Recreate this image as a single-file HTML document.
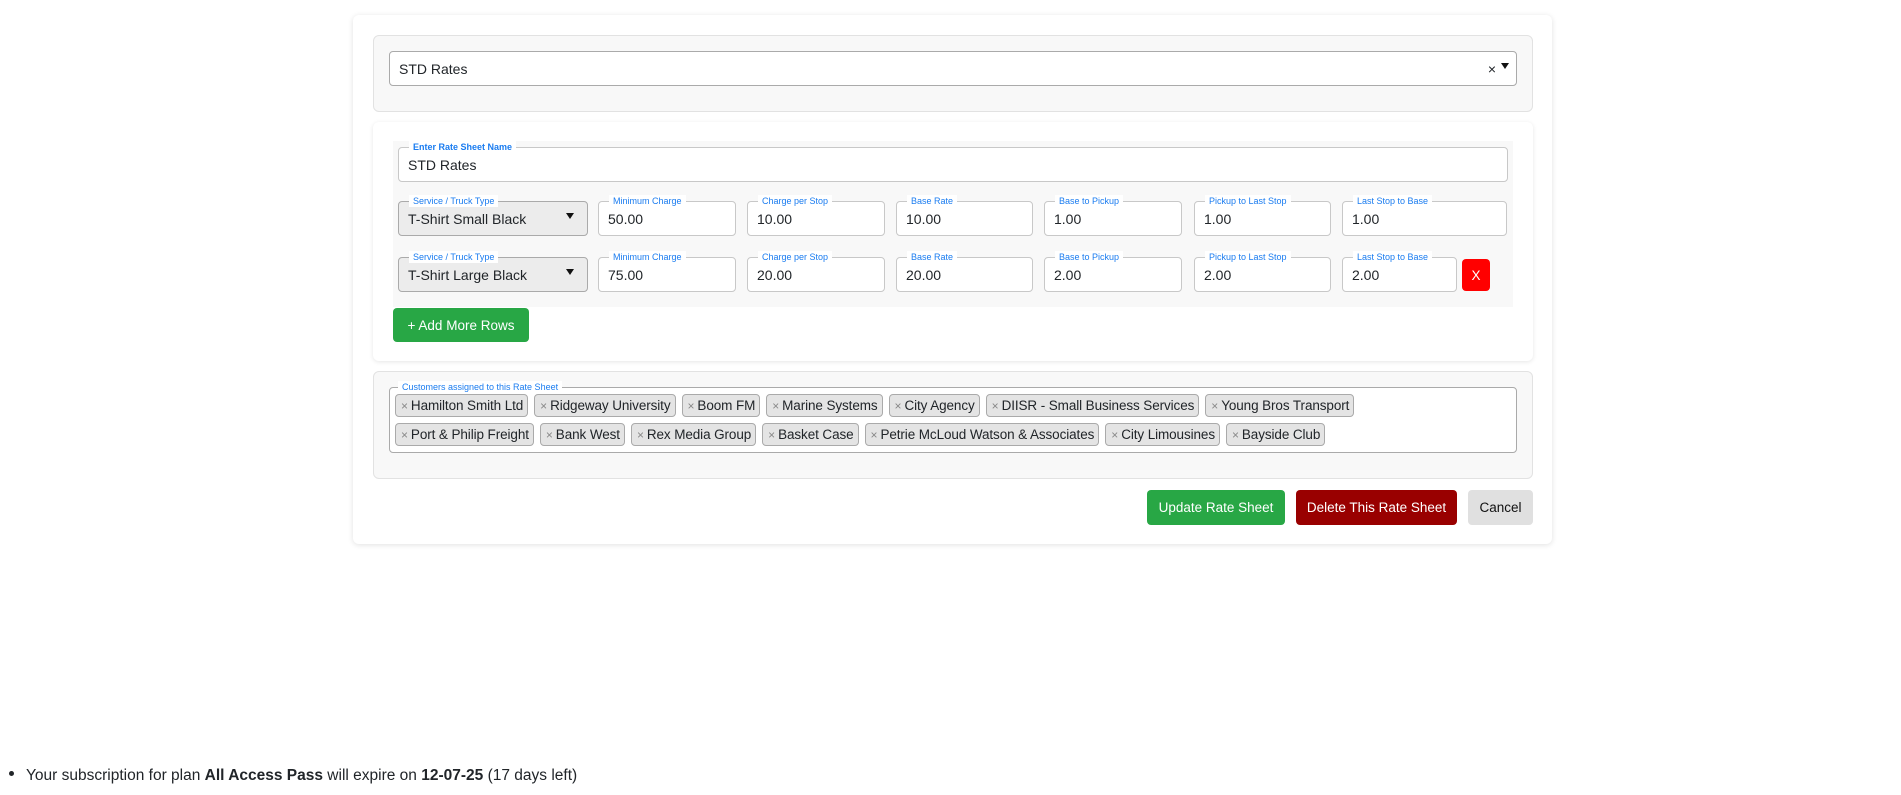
<!DOCTYPE html>
<html><head><meta charset="utf-8"><style>
*{box-sizing:border-box;margin:0;padding:0}
body{width:1901px;height:795px;background:#fff;font-family:"Liberation Sans",sans-serif;color:#212529;position:relative;overflow:hidden}
.abs{position:absolute}
.card{left:353px;top:15px;width:1199px;height:529px;background:#fff;border-radius:6px;box-shadow:0 1px 6px rgba(0,0,0,.12)}
.panel{background:#f8f8f8;border:1px solid #e2e2e2;border-radius:6px}
.inp{position:absolute;border:1px solid #c8c8c8;border-radius:4px;background:#fff;font-size:14px;padding-left:9px;display:flex;align-items:center;height:35px}
.lbl{position:absolute;top:-7px;left:10px;background:#fff;color:#1a7cf0;font-size:9px;padding:0 4px;line-height:12px;white-space:nowrap}
.sel{background:#ececec;border-color:#aaa}
.tri{position:absolute;width:0;height:0;border-left:4px solid transparent;border-right:4px solid transparent;border-top:6px solid #111}
.btn{position:absolute;color:#fff;font-size:13.5px;display:flex;align-items:center;justify-content:center;border-radius:4px}
.tags{position:absolute;left:389px;top:387px;width:1128px;height:66px;border:1px solid #aaa;border-radius:4px;background:#fff;padding:6px 4px 0 5px}
.row{display:flex;gap:6px;margin-bottom:6px}
.tag{height:23px;background:#e4e4e4;border:1px solid #aaa;border-radius:4px;font-size:13.5px;padding:0 4px 0 5px;display:flex;align-items:center;white-space:nowrap;letter-spacing:-0.1px}
.tag b{color:#888;font-weight:normal;font-size:12px;margin-right:3px}
</style></head><body>
<div class="abs card"></div>
<div class="abs panel" style="left:373px;top:35px;width:1160px;height:77px"></div>
<div class="inp" style="left:389px;top:51px;width:1128px;height:35px;border-color:#aaa">STD Rates
<span class="abs" style="right:20px;top:9px;font-size:14px">×</span><span class="tri" style="right:7px;top:11px"></span></div>

<div class="abs" style="left:373px;top:122px;width:1160px;height:239px;background:#fff;border-radius:6px;box-shadow:0 1px 5px rgba(0,0,0,.1)"></div>
<div class="abs" style="left:393px;top:141px;width:1120px;height:166px;background:#f8f8f8"></div>
<div class="inp" style="left:398px;top:147px;width:1110px">STD Rates<span class="lbl" style="font-weight:bold">Enter Rate Sheet Name</span></div>

<div class="inp sel" style="left:398px;top:201px;width:190px">T-Shirt Small Black<span class="lbl">Service / Truck Type</span><span class="tri" style="right:13px;top:11px"></span></div>
<div class="inp" style="left:598px;top:201px;width:138px">50.00<span class="lbl">Minimum Charge</span></div>
<div class="inp" style="left:747px;top:201px;width:138px">10.00<span class="lbl">Charge per Stop</span></div>
<div class="inp" style="left:896px;top:201px;width:137px">10.00<span class="lbl">Base Rate</span></div>
<div class="inp" style="left:1044px;top:201px;width:138px">1.00<span class="lbl">Base to Pickup</span></div>
<div class="inp" style="left:1194px;top:201px;width:137px">1.00<span class="lbl">Pickup to Last Stop</span></div>
<div class="inp" style="left:1342px;top:201px;width:165px">1.00<span class="lbl">Last Stop to Base</span></div>

<div class="inp sel" style="left:398px;top:257px;width:190px">T-Shirt Large Black<span class="lbl">Service / Truck Type</span><span class="tri" style="right:13px;top:11px"></span></div>
<div class="inp" style="left:598px;top:257px;width:138px">75.00<span class="lbl">Minimum Charge</span></div>
<div class="inp" style="left:747px;top:257px;width:138px">20.00<span class="lbl">Charge per Stop</span></div>
<div class="inp" style="left:896px;top:257px;width:137px">20.00<span class="lbl">Base Rate</span></div>
<div class="inp" style="left:1044px;top:257px;width:138px">2.00<span class="lbl">Base to Pickup</span></div>
<div class="inp" style="left:1194px;top:257px;width:137px">2.00<span class="lbl">Pickup to Last Stop</span></div>
<div class="inp" style="left:1342px;top:257px;width:115px">2.00<span class="lbl">Last Stop to Base</span></div>
<div class="btn" style="left:1462px;top:259px;width:28px;height:32px;background:#f00">X</div>

<div class="btn" style="left:393px;top:308px;width:136px;height:34px;background:#28a745">+ Add More Rows</div>

<div class="abs panel" style="left:373px;top:371px;width:1160px;height:108px"></div>
<div class="tags">
<span class="lbl" style="top:-7px;left:8px">Customers assigned to this Rate Sheet</span>
<div class="row">
<div class="tag"><b>×</b>Hamilton Smith Ltd</div>
<div class="tag"><b>×</b>Ridgeway University</div>
<div class="tag"><b>×</b>Boom FM</div>
<div class="tag"><b>×</b>Marine Systems</div>
<div class="tag"><b>×</b>City Agency</div>
<div class="tag"><b>×</b>DIISR - Small Business Services</div>
<div class="tag"><b>×</b>Young Bros Transport</div>
</div>
<div class="row">
<div class="tag"><b>×</b>Port &amp; Philip Freight</div>
<div class="tag"><b>×</b>Bank West</div>
<div class="tag"><b>×</b>Rex Media Group</div>
<div class="tag"><b>×</b>Basket Case</div>
<div class="tag"><b>×</b>Petrie McLoud Watson &amp; Associates</div>
<div class="tag"><b>×</b>City Limousines</div>
<div class="tag"><b>×</b>Bayside Club</div>
</div>
</div>

<div class="btn" style="left:1147px;top:490px;width:138px;height:35px;background:#28a745">Update Rate Sheet</div>
<div class="btn" style="left:1296px;top:490px;width:161px;height:35px;background:#990000">Delete This Rate Sheet</div>
<div class="btn" style="left:1468px;top:490px;width:65px;height:35px;background:#e0e0e0;color:#111">Cancel</div>

<div class="abs" style="left:9px;top:767px;font-size:15.5px;white-space:nowrap"><span style="display:inline-block;width:5px;height:5px;border-radius:50%;background:#212529;vertical-align:middle;margin-right:12px;position:relative;top:-2px"></span>Your subscription for plan <b>All Access Pass</b> will expire on <b>12-07-25</b> (17 days left)</div>
</body></html>
